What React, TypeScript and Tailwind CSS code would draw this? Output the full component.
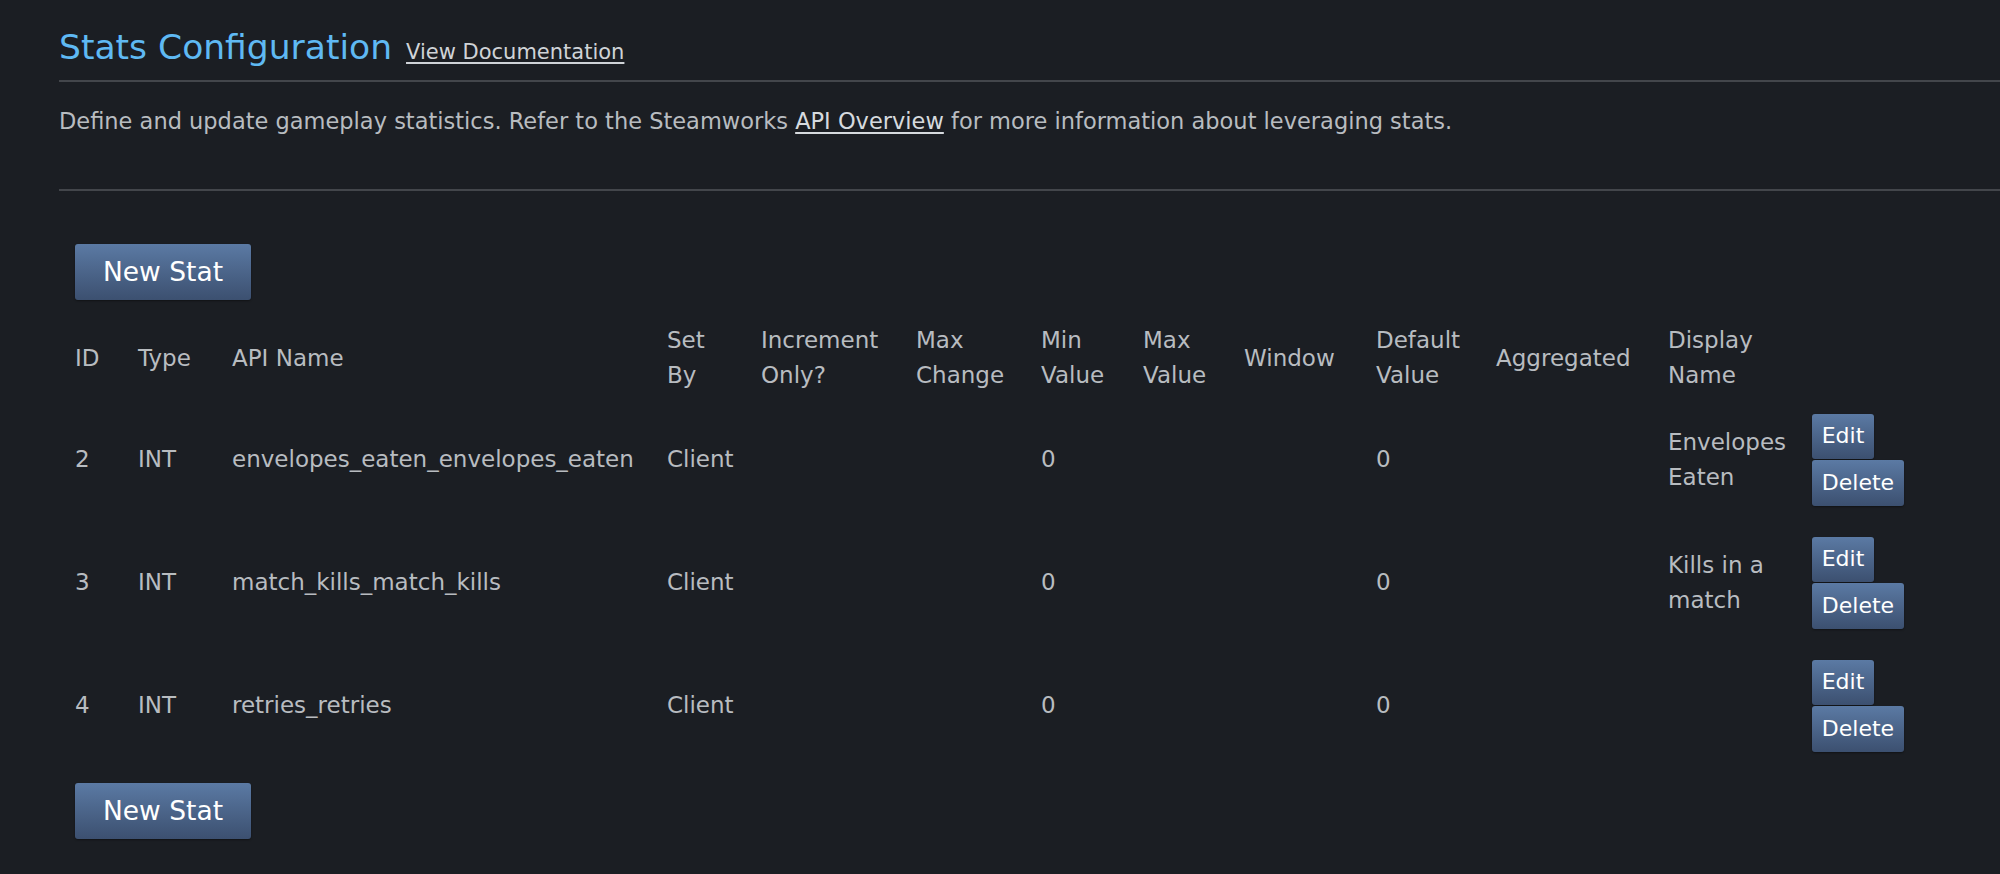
import React from "react";

type Stat = {
  id: number;
  type: string;
  apiName: string;
  setBy: string;
  min: string;
  def: string;
  display: string[];
};

const stats: Stat[] = [
  { id: 2, type: "INT", apiName: "envelopes_eaten_envelopes_eaten", setBy: "Client", min: "0", def: "0", display: ["Envelopes", "Eaten"] },
  { id: 3, type: "INT", apiName: "match_kills_match_kills", setBy: "Client", min: "0", def: "0", display: ["Kills in a", "match"] },
  { id: 4, type: "INT", apiName: "retries_retries", setBy: "Client", min: "0", def: "0", display: [] },
];

const headers: string[][] = [
  ["ID"],
  ["Type"],
  ["API Name"],
  ["Set", "By"],
  ["Increment", "Only?"],
  ["Max", "Change"],
  ["Min", "Value"],
  ["Max", "Value"],
  ["Window"],
  ["Default", "Value"],
  ["Aggregated"],
  ["Display", "Name"],
  [],
];

const cols =
  "grid grid-cols-[63px_94px_435px_94px_155px_125px_102px_101px_132px_120px_172px_144px_120px]";

const btn =
  "rounded-[3px] bg-gradient-to-b from-[#5b7aa4] to-[#3c5070] text-white shadow-[0_1px_2px_rgba(0,0,0,0.4)]";

function NewStatButton() {
  return (
    <button className={`${btn} w-[176px] h-[56px] text-[26.5px] leading-none`}>New Stat</button>
  );
}

function Lines({ lines }: { lines: string[] }) {
  return (
    <div className="flex flex-col">
      {lines.map((l) => (
        <span key={l} className="whitespace-nowrap">
          {l}
        </span>
      ))}
    </div>
  );
}

export default function App() {
  return (
    <div
      className="min-h-[874px] bg-[#1b1e23] text-[#b8bcc0] pl-[59px]"
      style={{ fontFamily: '"DejaVu Sans", "Open Sans", sans-serif' }}
    >
      <div className="flex items-baseline gap-[14px] pt-[23px] pb-[9px]">
        <h1 className="text-[34.5px] leading-[48px] text-[#5fb9f3]">Stats Configuration</h1>
        <a className="text-[21px] text-[#cfd3d7] underline underline-offset-[3px]">View Documentation</a>
      </div>
      <div className="h-[2px] bg-[#43464b]" />
      <p className="text-[22.5px] leading-[36px] pt-[21px]">
        Define and update gameplay statistics. Refer to the Steamworks{" "}
        <a className="text-[#d6dade] underline underline-offset-[3px]">API Overview</a> for more information about
        leveraging stats.
      </p>
      <div className="h-[2px] bg-[#43464b] mt-[50px]" />

      <div className="pl-[16px] pt-[53px]">
        <NewStatButton />

        <div className={`${cols} items-center text-[23px] leading-[35px] pt-[18px] h-[98px]`}>
          {headers.map((h, i) => (
            <Lines key={i} lines={h} />
          ))}
        </div>

        {stats.map((s) => (
          <div key={s.id} className={`${cols} items-center text-[23px] leading-[35px] h-[123px]`}>
            <span>{s.id}</span>
            <span>{s.type}</span>
            <span>{s.apiName}</span>
            <span>{s.setBy}</span>
            <span />
            <span />
            <span>{s.min}</span>
            <span />
            <span />
            <span>{s.def}</span>
            <span />
            <Lines lines={s.display} />
            <div className="flex flex-col items-start gap-[1px] text-[22px]">
              <button className={`${btn} h-[45px] w-[62px] leading-none`}>Edit</button>
              <button className={`${btn} h-[46px] w-[92px] leading-none`}>Delete</button>
            </div>
          </div>
        ))}

        <div className="pt-[16px]">
          <NewStatButton />
        </div>
      </div>
    </div>
  );
}
